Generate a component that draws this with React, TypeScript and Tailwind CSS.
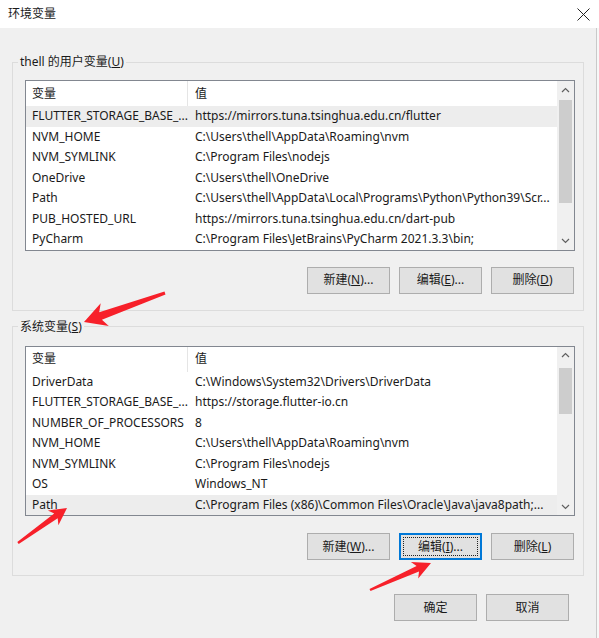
import type { ReactNode } from 'react'

const font = { fontFamily: '"Noto Sans", "Noto Sans CJK SC", sans-serif' }

type Row = [string, string]

const userVars: Row[] = [
  ['FLUTTER_STORAGE_BASE_...', 'https://mirrors.tuna.tsinghua.edu.cn/flutter'],
  ['NVM_HOME', 'C:\\Users\\thell\\AppData\\Roaming\\nvm'],
  ['NVM_SYMLINK', 'C:\\Program Files\\nodejs'],
  ['OneDrive', 'C:\\Users\\thell\\OneDrive'],
  ['Path', 'C:\\Users\\thell\\AppData\\Local\\Programs\\Python\\Python39\\Scr...'],
  ['PUB_HOSTED_URL', 'https://mirrors.tuna.tsinghua.edu.cn/dart-pub'],
  ['PyCharm', 'C:\\Program Files\\JetBrains\\PyCharm 2021.3.3\\bin;'],
]

const sysVars: Row[] = [
  ['DriverData', 'C:\\Windows\\System32\\Drivers\\DriverData'],
  ['FLUTTER_STORAGE_BASE_...', 'https://storage.flutter-io.cn'],
  ['NUMBER_OF_PROCESSORS', '8'],
  ['NVM_HOME', 'C:\\Users\\thell\\AppData\\Roaming\\nvm'],
  ['NVM_SYMLINK', 'C:\\Program Files\\nodejs'],
  ['OS', 'Windows_NT'],
  ['Path', 'C:\\Program Files (x86)\\Common Files\\Oracle\\Java\\java8path;...'],
]

function Chevron({ up }: { up?: boolean }) {
  return (
    <svg width="9" height="6" viewBox="0 0 9 6">
      <polyline
        points={up ? '1,5 4.5,1.5 8,5' : '1,1 4.5,4.5 8,1'}
        fill="none"
        stroke="#606060"
        strokeWidth="1.2"
      />
    </svg>
  )
}

function VarList({ rows, selected, thumbTop, thumbH }: { rows: Row[]; selected: number; thumbTop: number; thumbH: number }) {
  return (
    <div className="flex border border-[#828790] bg-white text-[12px] text-[#1a1a1a]">
      <div className="flex-1 min-w-0">
        <div className="flex h-[25px] items-center">
          <div className="w-[162px] h-full flex items-center px-[6px] border-r border-[#e5e5e5]">变量</div>
          <div className="pl-[7px]">值</div>
        </div>
        {rows.map(([k, v], i) => (
          <div key={i} className={`flex h-[20.5px] items-center whitespace-nowrap ${i === selected ? 'bg-[#ededed]' : ''}`}>
            <div className="w-[162px] px-[6px] overflow-hidden">{k}</div>
            <div className="pl-[7px] flex-1 overflow-hidden">{v}</div>
          </div>
        ))}
      </div>
      <div className="w-[17px] bg-[#f0f0f0] flex flex-col items-center">
        <div className="h-[17px] flex items-center justify-center">
          <Chevron up />
        </div>
        <div className="flex-1 w-full px-[2px] relative">
          <div className="w-[13px] bg-[#cdcdcd]" style={{ marginTop: thumbTop, height: thumbH }} />
        </div>
        <div className="h-[17px] flex items-center justify-center">
          <Chevron />
        </div>
      </div>
    </div>
  )
}

function Btn({ children, focused }: { children: ReactNode; focused?: boolean }) {
  return (
    <div
      className={`relative w-[83px] h-[27px] flex items-center justify-center text-[12px] text-[#1a1a1a] bg-[#e1e1e1] border ${
        focused ? 'border-[#0078d7] shadow-[inset_0_0_0_1px_#0078d7]' : 'border-[#adadad]'
      }`}
    >
      {focused && <div className="absolute inset-[3px] border border-dotted border-[#222]" />}
      {children}
    </div>
  )
}

function Group({ label, children, pt, pb, gap }: { label: ReactNode; children: ReactNode; pt: string; pb: string; gap: string }) {
  return (
    <fieldset className={`border border-[#dcdcdc] pl-[12px] pr-[8px] ${pt} ${pb}`}>
      <legend className="ml-[-7px] px-[2px] text-[12px] leading-[16px] text-[#1a1a1a]">{label}</legend>
      <div className={`flex flex-col ${gap}`}>{children}</div>
    </fieldset>
  )
}

function arrow(tail: [number, number], tip: [number, number], headLen: number, headW: number, w0: number, w1: number) {
  const dx = tip[0] - tail[0]
  const dy = tip[1] - tail[1]
  const len = Math.hypot(dx, dy)
  const ux = dx / len
  const uy = dy / len
  const nx = -uy
  const ny = ux
  const bx = tip[0] - ux * headLen
  const by = tip[1] - uy * headLen
  const nbx = tip[0] - ux * headLen * 0.8
  const nby = tip[1] - uy * headLen * 0.8
  const p = [
    [tail[0] + nx * w0, tail[1] + ny * w0],
    [nbx + nx * w1, nby + ny * w1],
    [bx + nx * headW, by + ny * headW],
    [tip[0], tip[1]],
    [bx - nx * headW, by - ny * headW],
    [nbx - nx * w1, nby - ny * w1],
    [tail[0] - nx * w0, tail[1] - ny * w0],
  ]
  return p.map((q) => q.map((n) => n.toFixed(1)).join(',')).join(' ')
}

const u = (s: string) => <span className="underline">{s}</span>

export default function App() {
  return (
    <div className="relative w-[599px] h-[638px] overflow-hidden bg-[#f7f7f7] flex flex-col" style={font}>
      <div className="h-[28px] bg-white flex items-center justify-between pl-[8px] pr-[9px] text-[12px] text-[#1a1a1a]">
        <span>环境变量</span>
        <svg width="13" height="13" viewBox="0 0 13 13">
          <path d="M0.5 0.5 L12.5 12.5 M12.5 0.5 L0.5 12.5" stroke="#222" strokeWidth="1" />
        </svg>
      </div>
      <div className="flex-1 w-[597px] bg-[#f0f0f0] border-r border-[#c9c9c9] px-[12px] pt-[26px] flex flex-col">
        <Group label={<>thell 的用户变量({u('U')})</>} pt="pt-[10px]" pb="pb-[16px]" gap="gap-[16px]">
          <VarList rows={userVars} selected={0} thumbTop={2} thumbH={103} />
          <div className="flex justify-end gap-[9px] pr-[1px]">
            <Btn>新建({u('N')})...</Btn>
            <Btn>编辑({u('E')})...</Btn>
            <Btn>删除({u('D')})</Btn>
          </div>
        </Group>
        <div className="mt-[8px]">
          <Group label={<>系统变量({u('S')})</>} pt="pt-[11px]" pb="pb-[15px]" gap="gap-[17px]">
            <VarList rows={sysVars} selected={6} thumbTop={4} thumbH={46} />
            <div className="flex justify-end gap-[9px] pr-[1px]">
              <Btn>新建({u('W')})...</Btn>
              <Btn focused>编辑({u('I')})...</Btn>
              <Btn>删除({u('L')})</Btn>
            </div>
          </Group>
        </div>
        <div className="flex justify-end gap-[9px] mt-[18px] pr-[15px]">
          <Btn>确定</Btn>
          <Btn>取消</Btn>
        </div>
      </div>
      <svg className="absolute inset-0 pointer-events-none" width="599" height="638" viewBox="0 0 599 638">
        <polygon points={arrow([165, 293], [84, 322], 22, 12, 1.5, 4)} fill="#f7202a" />
        <polygon points={arrow([18, 543], [67, 508], 17, 9, 1.2, 3)} fill="#f7202a" />
        <polygon points={arrow([370, 590], [431, 563], 18, 9, 1.2, 3)} fill="#f7202a" />
      </svg>
    </div>
  )
}
